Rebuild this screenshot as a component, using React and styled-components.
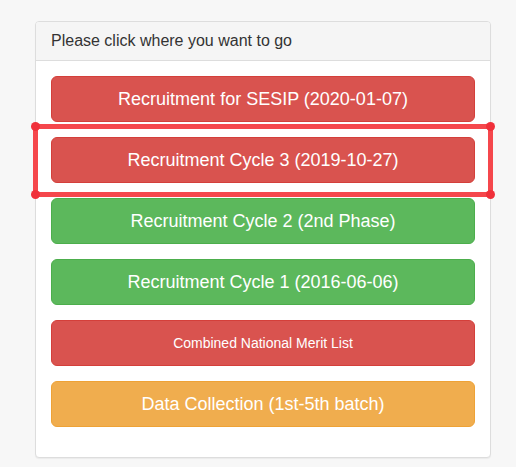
import React from 'react';
import styled, { createGlobalStyle } from 'styled-components';

const GlobalStyle = createGlobalStyle`
  html, body {
    margin: 0;
    padding: 0;
    background: #f7f7f7;
  }
  body {
    font-family: "Liberation Sans", Arial, sans-serif;
  }
`;

const Page = styled.div`
  width: 516px;
  height: 467px;
  box-sizing: border-box;
  padding: 21px 25px 0 35px;
`;

const Panel = styled.div`
  position: relative;
  background: #fff;
  border: 1px solid #ddd;
  border-radius: 4px;
  box-shadow: 0 1px 1px rgba(0, 0, 0, 0.05);
`;

const Heading = styled.div`
  background: #f5f5f5;
  border-bottom: 1px solid #ddd;
  border-radius: 3px 3px 0 0;
  padding: 10px 15px;
  color: #333;
  font-size: 16px;
  line-height: 18px;
`;

const Body = styled.div`
  display: flex;
  flex-direction: column;
  gap: 15px;
  padding: 15px 15px 30px;
`;

const colors = {
  danger: { bg: '#d9534f', border: '#d43f3a' },
  success: { bg: '#5cb85c', border: '#4cae4c' },
  warning: { bg: '#f0ad4e', border: '#eea236' },
};

const Button = styled.a`
  display: block;
  box-sizing: border-box;
  height: 46px;
  padding: 10px 16px;
  border: 1px solid ${(p) => colors[p.$variant].border};
  border-radius: 6px;
  background: ${(p) => colors[p.$variant].bg};
  color: #fff;
  text-align: center;
  text-decoration: none;
  font-size: ${(p) => (p.$small ? '14px' : '18px')};
  line-height: 24px;
  cursor: pointer;
`;

const Highlight = styled.div`
  position: absolute;
  left: -3px;
  right: -3px;
  top: 102px;
  height: 63px;
  border: 5px solid #f5474c;
  pointer-events: none;
`;

const Dot = styled.span`
  position: absolute;
  width: 9px;
  height: 9px;
  border-radius: 50%;
  background: #f0303a;
  ${(p) => (p.$top ? 'top: -7px;' : 'bottom: -7px;')}
  ${(p) => (p.$left ? 'left: -7px;' : 'right: -7px;')}
`;

const links = [
  { label: 'Recruitment for SESIP (2020-01-07)', variant: 'danger' },
  { label: 'Recruitment Cycle 3 (2019-10-27)', variant: 'danger' },
  { label: 'Recruitment Cycle 2 (2nd Phase)', variant: 'success' },
  { label: 'Recruitment Cycle 1 (2016-06-06)', variant: 'success' },
  { label: 'Combined National Merit List', variant: 'danger', small: true },
  { label: 'Data Collection (1st-5th batch)', variant: 'warning' },
];

const App = () => {
  return (
    <>
      <GlobalStyle />
      <Page>
        <Panel>
          <Heading>Please click where you want to go</Heading>
          <Body>
            {links.map((l) => (
              <Button key={l.label} $variant={l.variant} $small={l.small}>
                {l.label}
              </Button>
            ))}
          </Body>
          <Highlight>
            <Dot $top $left />
            <Dot $top />
            <Dot $left />
            <Dot />
          </Highlight>
        </Panel>
      </Page>
    </>
  );
};

export default App;
